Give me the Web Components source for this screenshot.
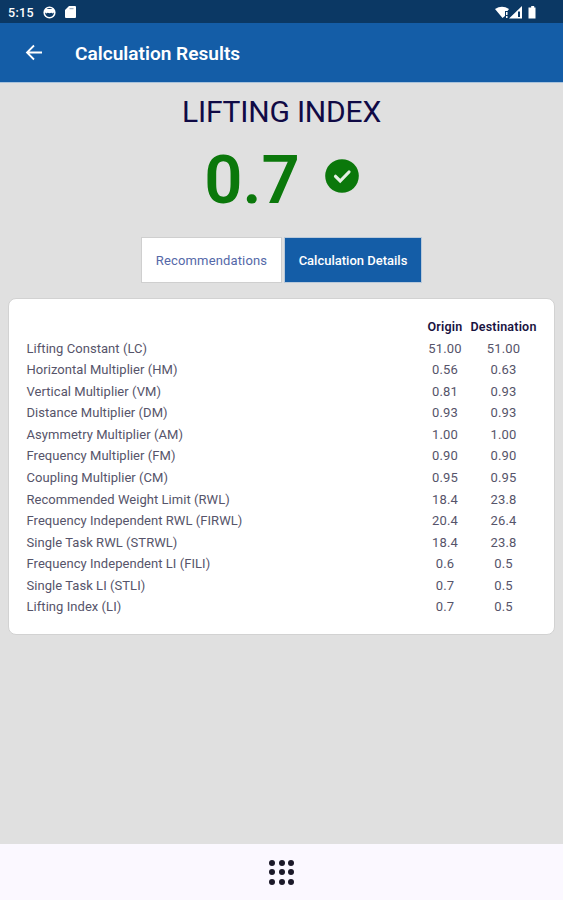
<!DOCTYPE html>
<html lang="en">
<head>
<meta charset="utf-8">
<title>Calculation Results</title>
<style>
    body {
        margin: 0;
        background: #e0e0e0;
        font-family: Roboto, "Liberation Sans", sans-serif;
        color: #19133f;
    }
</style>
</head>
<body>
<lifting-app></lifting-app>

<script>
class StatusBar extends HTMLElement {
    connectedCallback() {
        this.attachShadow({ mode: 'open' });
        this.shadowRoot.innerHTML = `
            <style>
                :host {
                    display: flex;
                    align-items: center;
                    height: 23px;
                    padding: 0 25px 0 8px;
                    background: #0b3864;
                    color: #fff;
                    box-sizing: border-box;
                    flex: none;
                }
                .time {
                    width: 35px;
                    font-size: 12.5px;
                    font-weight: 500;
                    letter-spacing: 0.3px;
                    line-height: 23px;
                    padding-top: 2px;
                }
                svg { display: block; fill: #fff; }
                .left { margin-top: 1px; }
                .sd { margin-left: 9px; }
                .signals { margin-left: auto; margin-top: 1px; }
            </style>
            <span class="time">5:15</span>
            <svg class="left" width="13" height="13" viewBox="0 0 13 13">
                <circle cx="6.5" cy="6.5" r="5.3" fill="none" stroke="#fff" stroke-width="1.6"/>
                <path d="M2 3h9v3.400L9.6 7.600 8.4 6.800 6.5 7.200 4.6 6.800 3.4 7.600 2 6.400z"/>
            </svg>
            <svg class="left sd" width="11" height="12" viewBox="0 0 11 12">
                <path d="M4 0h6a1 1 0 0 1 1 1v10a1 1 0 0 1-1 1H1a1 1 0 0 1-1-1V4z"/>
                <path d="M4.500 2.200h4v1h-4z" fill="#8a9fb6"/>
            </svg>
            <svg class="signals" width="43" height="13" viewBox="0 0 43 13">
                <path d="M0 3Q7 -1.500 14 3L12.500 5H10v5L7.500 12z"/>
                <path d="M11 6h1.500v3H11zM11 10h1.500v2H11z"/>
                <path fill-rule="evenodd" d="M14 12.500L27 0v12.500zM23 5.500v5.500h2V5.500z"/>
                <path d="M34.500 1.500h1.700V0h3v1.500h1.300v11h-7v-11z"/>
            </svg>
        `;
    }
}

class AppHeader extends HTMLElement {
    connectedCallback() {
        this.attachShadow({ mode: 'open' });
        this.shadowRoot.innerHTML = `
            <style>
                :host {
                    display: flex;
                    align-items: center;
                    height: 60px;
                    padding: 3px 0 0 25px;
                    background: #145da7;
                    border-bottom: 1px solid #a9c3dc;
                    color: #fff;
                    box-sizing: border-box;
                    flex: none;
                }
                svg { display: block; width: 18px; height: 17px; margin-right: 32px; margin-bottom: 3px; }
                .title {
                    font-size: 19.100px;
                    font-weight: 600;
                    line-height: 24px;
                }
            </style>
            <svg viewBox="0 0 18 17" fill="none" stroke="#fff" stroke-width="1.8">
                <path d="M9 1.500L2 8.500l7 7M2 8.500h15"/>
            </svg>
            <span class="title"><slot></slot></span>
        `;
    }
}

class IndexScore extends HTMLElement {
    connectedCallback() {
        this.attachShadow({ mode: 'open' });
        this.shadowRoot.innerHTML = `
            <style>
                :host { display: block; text-align: center; }
                .label {
                    font-size: 30px;
                    font-weight: 400;
                    line-height: 36px;
                    letter-spacing: -0.2px;
                    color: #100a45;
                }
                .score {
                    display: flex;
                    align-items: center;
                    justify-content: center;
                    gap: 25px;
                    height: 80px;
                    margin-top: 11px;
                    color: #0b780b;
                }
                .value {
                    font-size: 67px;
                    font-weight: 600;
                    line-height: 80px;
                    margin-bottom: 3px;
                }
                svg { display: block; width: 34px; height: 34px; margin-bottom: 11px; }
            </style>
            <div class="label"><slot></slot></div>
            <div class="score">
                <span class="value">${this.getAttribute('value')}</span>
                <svg viewBox="0 0 34 34">
                    <circle cx="17" cy="17" r="16.800" fill="#0b780b"/>
                    <path d="M10.500 17.300l4.700 4.700 8.800-9" fill="none" stroke="#e6f0e6" stroke-width="3.200" stroke-linecap="round"/>
                </svg>
            </div>
        `;
    }
}

class TabButton extends HTMLElement {
    connectedCallback() {
        this.attachShadow({ mode: 'open' });
        this.shadowRoot.innerHTML = `
            <style>
                :host {
                    display: flex;
                    align-items: center;
                    justify-content: center;
                    width: 141px;
                    height: 46px;
                    border: 1px solid #cfcfcf;
                    background: #fff;
                    color: #5468a8;
                    font-size: 13px;
                    letter-spacing: 0.15px;
                    box-sizing: border-box;
                }
                :host([active]) {
                    width: 138px;
                    border-color: #b9c9da;
                    background: #145da7;
                    color: #fff;
                    font-weight: 500;
                    letter-spacing: 0;
                }
            </style>
            <slot></slot>
        `;
    }
}

class ResultRow extends HTMLElement {
    connectedCallback() {
        this.attachShadow({ mode: 'open' });
        this.shadowRoot.innerHTML = `
            <style>
                :host {
                    display: grid;
                    grid-template-columns: 1fr 47px 70px;
                    height: 21.570px;
                    line-height: 21.570px;
                    font-size: 13px;
                    color: #56546a;
                    letter-spacing: 0.05px;
                }
                :host([heading]) {
                    color: #19133f;
                    font-size: 12.500px;
                    font-weight: 600;
                }
                .num { text-align: center; white-space: nowrap; letter-spacing: 0.2px; }
            </style>
            <span><slot></slot></span>
            <span class="num">${this.getAttribute('origin')}</span>
            <span class="num">${this.getAttribute('destination')}</span>
        `;
    }
}

class ResultCard extends HTMLElement {
    connectedCallback() {
        this.attachShadow({ mode: 'open' });
        this.shadowRoot.innerHTML = `
            <style>
                :host {
                    display: block;
                    height: 337px;
                    margin: 15px 8px 0;
                    padding: 17px 15.500px 0 17.500px;
                    background: #fff;
                    border: 1px solid #d2d2d2;
                    border-radius: 8px;
                    box-sizing: border-box;
                }
            </style>
            <slot></slot>
        `;
    }
}

class BottomBar extends HTMLElement {
    connectedCallback() {
        this.attachShadow({ mode: 'open' });
        this.shadowRoot.innerHTML = `
            <style>
                :host {
                    display: flex;
                    align-items: center;
                    justify-content: center;
                    height: 56px;
                    background: #fbf8ff;
                    flex: none;
                }
                .dots {
                    display: grid;
                    grid-template-columns: repeat(3, 6px);
                    gap: 3.500px;
                }
                .dots i { height: 6px; border-radius: 50%; background: #1b1929; }
            </style>
            <div class="dots">${'<i></i>'.repeat(9)}</div>
        `;
    }
}

class LiftingApp extends HTMLElement {
    connectedCallback() {
        const rows = [
            ['Lifting Constant (LC)', '51.00', '51.00'],
            ['Horizontal Multiplier (HM)', '0.56', '0.63'],
            ['Vertical Multiplier (VM)', '0.81', '0.93'],
            ['Distance Multiplier (DM)', '0.93', '0.93'],
            ['Asymmetry Multiplier (AM)', '1.00', '1.00'],
            ['Frequency Multiplier (FM)', '0.90', '0.90'],
            ['Coupling Multiplier (CM)', '0.95', '0.95'],
            ['Recommended Weight Limit (RWL)', '18.4', '23.8'],
            ['Frequency Independent RWL (FIRWL)', '20.4', '26.4'],
            ['Single Task RWL (STRWL)', '18.4', '23.8'],
            ['Frequency Independent LI (FILI)', '0.6', '0.5'],
            ['Single Task LI (STLI)', '0.7', '0.5'],
            ['Lifting Index (LI)', '0.7', '0.5']
        ];

        this.attachShadow({ mode: 'open' });
        this.shadowRoot.innerHTML = `
            <style>
                :host { display: flex; flex-direction: column; height: 900px; }
                main { flex: 1; padding-top: 11px; }
                .tabs { display: flex; justify-content: center; gap: 2px; margin-top: 16px; }
            </style>
            <status-bar></status-bar>
            <app-header>Calculation Results</app-header>
            <main>
                <index-score value="0.7">LIFTING INDEX</index-score>
                <div class="tabs">
                    <tab-button>Recommendations</tab-button>
                    <tab-button active>Calculation Details</tab-button>
                </div>
                <result-card>
                    <result-row heading origin="Origin" destination="Destination"></result-row>
                    ${rows.map(r => `<result-row origin="${r[1]}" destination="${r[2]}">${r[0]}</result-row>`).join('')}
                </result-card>
            </main>
            <bottom-bar></bottom-bar>
        `;
    }
}

customElements.define('status-bar', StatusBar);
customElements.define('app-header', AppHeader);
customElements.define('index-score', IndexScore);
customElements.define('tab-button', TabButton);
customElements.define('result-row', ResultRow);
customElements.define('result-card', ResultCard);
customElements.define('bottom-bar', BottomBar);
customElements.define('lifting-app', LiftingApp);
</script>
</body>
</html>
